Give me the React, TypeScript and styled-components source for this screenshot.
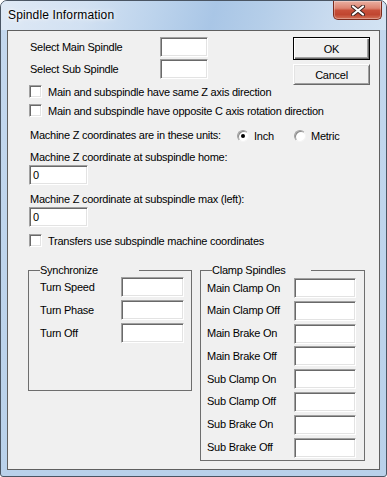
import React from 'react';
import styled, { createGlobalStyle, css } from 'styled-components';

const GlobalStyle = createGlobalStyle`
  html, body {
    margin: 0;
    padding: 0;
    background: #ffffff;
  }
  body {
    font-family: 'Liberation Sans', Arial, sans-serif;
    font-size: 11px;
    letter-spacing: -0.25px;
    color: #000;
  }
`;

const sunken = css`
  box-sizing: border-box;
  background: #ffffff;
  border: 1px solid;
  border-color: #a0a0a0 #ffffff #ffffff #a0a0a0;
  box-shadow: inset 1px 1px 0 #696969, inset -1px -1px 0 #e3e3e3;
`;

const Window = styled.div`
  box-sizing: border-box;
  width: 387px;
  height: 477px;
  display: flex;
  flex-direction: column;
  border: 1px solid #4a5563;
  border-radius: 7px 7px 3px 3px;
  background: linear-gradient(180deg, #c4d8ee 0%, #b9d1ea 100%);
  overflow: hidden;
`;

const TitleBar = styled.div`
  flex: none;
  height: 29px;
  display: flex;
  align-items: flex-start;
  padding-left: 7px;
  background: linear-gradient(
    105deg,
    #dfe9f5 0%,
    #d2e1f2 22%,
    #bcd3ec 40%,
    #a9c6e6 55%,
    #b5cee9 68%,
    #c9dbef 85%,
    #d3e3f3 100%
  );
`;

const Title = styled.span`
  margin-top: 7px;
  font-size: 12px;
  line-height: 15px;
  letter-spacing: 0.15px;
  color: #000;
  text-shadow: 0 0 6px rgba(255, 255, 255, 0.95), 0 0 3px rgba(255, 255, 255, 0.9);
`;

const CloseButton = styled.div`
  box-sizing: border-box;
  width: 49px;
  height: 19px;
  margin-left: auto;
  margin-right: 4px;
  display: flex;
  align-items: center;
  justify-content: center;
  border: 1px solid #7c2b1d;
  border-top: none;
  border-radius: 0 0 5px 5px;
  background: linear-gradient(
    180deg,
    #eab0a2 0%,
    #dd8471 40%,
    #c8503a 52%,
    #c04630 75%,
    #d27158 100%
  );
  box-shadow: inset 0 0 0 1px rgba(255, 255, 255, 0.3);
`;

const Client = styled.div`
  flex: 1;
  margin: 0 6px 6px;
  border: 1px solid #5f5f5f;
  background: #f0f0f0;
  padding: 6px 9px 0 21px;
  display: flex;
  flex-direction: column;
`;

const TopSection = styled.div`
  display: flex;
  align-items: flex-start;
`;

const SelectList = styled.div`
  display: flex;
  flex-direction: column;
  gap: 2px;
`;

const SelectRow = styled.div`
  display: grid;
  grid-template-columns: 131px 48px;
  align-items: center;
  height: 20px;
`;

const Label = styled.span`
  margin-left: 1px;
  line-height: 13px;
  white-space: nowrap;
`;

const TextBox = styled.div<{ $w: number }>`
  ${sunken};
  width: ${(p) => p.$w}px;
  height: 20px;
  padding-left: 3px;
  line-height: 18px;
`;

const ButtonColumn = styled.div`
  margin-left: auto;
  width: 77px;
  display: flex;
  flex-direction: column;
  gap: 4px;
`;

const PushButton = styled.div<{ $default?: boolean }>`
  box-sizing: border-box;
  height: ${(p) => (p.$default ? 23 : 21)}px;
  display: flex;
  align-items: center;
  justify-content: center;
  background: #f0f0f0;
  border: 1px solid;
  border-color: ${(p) =>
    p.$default ? '#000 #000 #000 #000' : '#ffffff #696969 #696969 #ffffff'};
  box-shadow: ${(p) =>
    p.$default
      ? 'inset 1px 1px 0 #ffffff, inset -1px -1px 0 #696969, inset -2px -2px 0 #a0a0a0'
      : 'inset 1px 1px 0 #e3e3e3, inset -1px -1px 0 #a0a0a0'};
`;

const CheckList = styled.div<{ $top: number }>`
  margin-top: ${(p) => p.$top}px;
  display: flex;
  flex-direction: column;
  gap: 6px;
`;

const CheckRow = styled.div`
  display: flex;
  align-items: center;
  gap: 6px;
  height: 13px;
  white-space: nowrap;
`;

const CheckBox = styled.div`
  ${sunken};
  flex: none;
  width: 13px;
  height: 13px;
`;

const UnitsRow = styled.div`
  margin-top: 12px;
  display: flex;
  align-items: center;
  height: 13px;
`;

const UnitsLabel = styled(Label)`
  width: 207px;
`;

const RadioItem = styled.div<{ $w?: number }>`
  display: flex;
  align-items: center;
  gap: 5px;
  width: ${(p) => (p.$w ? `${p.$w}px` : 'auto')};
`;

const Radio = styled.div<{ $on?: boolean }>`
  box-sizing: border-box;
  width: 12px;
  height: 12px;
  border-radius: 50%;
  background: #ffffff;
  border: 1px solid;
  border-color: #a0a0a0 #f4f4f4 #f4f4f4 #a0a0a0;
  box-shadow: inset 1px 1px 0 #8a8a8a;
  display: flex;
  align-items: center;
  justify-content: center;

  &::after {
    content: '';
    display: ${(p) => (p.$on ? 'block' : 'none')};
    width: 4px;
    height: 4px;
    border-radius: 50%;
    background: #000;
  }
`;

const CoordLabel = styled(Label)<{ $top: number }>`
  display: block;
  margin-top: ${(p) => p.$top}px;
`;

const CoordBox = styled(TextBox)`
  margin-top: 1px;
`;

const GroupRow = styled.div`
  margin-top: 17px;
  margin-left: -1px;
  display: flex;
  align-items: flex-start;
  gap: 8px;
`;

const Group = styled.fieldset<{ $w: number }>`
  box-sizing: border-box;
  width: ${(p) => p.$w}px;
  margin: 0;
  padding: 0;
  border: 1px solid #6e6e6e;
  min-inline-size: 0;
`;

const GroupTitle = styled.legend`
  box-sizing: border-box;
  width: 99px;
  margin-left: 11px;
  padding: 0;
  line-height: 13px;
  white-space: nowrap;
`;

const GroupBody = styled.div<{ $h: number; $pad: number; $top: number; $cols: string; $gap: number }>`
  height: ${(p) => p.$h}px;
  box-sizing: border-box;
  padding: ${(p) => p.$top}px 0 0 ${(p) => p.$pad}px;
  display: grid;
  grid-template-columns: ${(p) => p.$cols};
  grid-auto-rows: 20px;
  row-gap: ${(p) => p.$gap}px;
  align-content: start;
  align-items: center;
`;

const GroupLabel = styled.span`
  line-height: 13px;
  white-space: nowrap;
`;

function CloseGlyph() {
  return (
    <svg width="14" height="11" viewBox="0 0 14 11">
      <path d="M2 1.5 L12 9.5 M12 1.5 L2 9.5" stroke="#3b2320" strokeWidth="4" strokeLinecap="round" />
      <path d="M2 1.5 L12 9.5 M12 1.5 L2 9.5" stroke="#ffffff" strokeWidth="2.2" strokeLinecap="round" />
    </svg>
  );
}

const syncRows = ['Turn Speed', 'Turn Phase', 'Turn Off'];
const clampRows = [
  'Main Clamp On',
  'Main Clamp Off',
  'Main Brake On',
  'Main Brake Off',
  'Sub Clamp On',
  'Sub Clamp Off',
  'Sub Brake On',
  'Sub Brake Off',
];

export default function App() {
  return (
    <>
      <GlobalStyle />
      <Window>
        <TitleBar>
          <Title>Spindle Information</Title>
          <CloseButton>
            <CloseGlyph />
          </CloseButton>
        </TitleBar>
        <Client>
          <TopSection>
            <SelectList>
              <SelectRow>
                <Label>Select Main Spindle</Label>
                <TextBox $w={48} />
              </SelectRow>
              <SelectRow>
                <Label>Select Sub Spindle</Label>
                <TextBox $w={48} />
              </SelectRow>
            </SelectList>
            <ButtonColumn>
              <PushButton $default>OK</PushButton>
              <PushButton>Cancel</PushButton>
            </ButtonColumn>
          </TopSection>

          <CheckList $top={0}>
            <CheckRow>
              <CheckBox />
              <span>Main and subspindle have same Z axis direction</span>
            </CheckRow>
            <CheckRow>
              <CheckBox />
              <span>Main and subspindle have opposite C axis rotation direction</span>
            </CheckRow>
          </CheckList>

          <UnitsRow>
            <UnitsLabel>Machine Z coordinates are in these units:</UnitsLabel>
            <RadioItem $w={57}>
              <Radio $on />
              <span>Inch</span>
            </RadioItem>
            <RadioItem>
              <Radio />
              <span>Metric</span>
            </RadioItem>
          </UnitsRow>

          <CoordLabel $top={9}>Machine Z coordinate at subspindle home:</CoordLabel>
          <CoordBox $w={59}>0</CoordBox>
          <CoordLabel $top={8}>Machine Z coordinate at subspindle max (left):</CoordLabel>
          <CoordBox $w={59}>0</CoordBox>

          <CheckList $top={7}>
            <CheckRow>
              <CheckBox />
              <span>Transfers use subspindle machine coordinates</span>
            </CheckRow>
          </CheckList>

          <GroupRow>
            <Group $w={164}>
              <GroupTitle>Synchronize</GroupTitle>
              <GroupBody $h={113} $pad={11} $top={0} $cols="81px 63px" $gap={3}>
                {syncRows.map((r) => (
                  <React.Fragment key={r}>
                    <GroupLabel>{r}</GroupLabel>
                    <TextBox $w={63} />
                  </React.Fragment>
                ))}
              </GroupBody>
            </Group>
            <Group $w={165}>
              <GroupTitle>Clamp Spindles</GroupTitle>
              <GroupBody $h={183} $pad={6} $top={1} $cols="87px 62px" $gap={2.8}>
                {clampRows.map((r) => (
                  <React.Fragment key={r}>
                    <GroupLabel>{r}</GroupLabel>
                    <TextBox $w={62} />
                  </React.Fragment>
                ))}
              </GroupBody>
            </Group>
          </GroupRow>
        </Client>
      </Window>
    </>
  );
}
